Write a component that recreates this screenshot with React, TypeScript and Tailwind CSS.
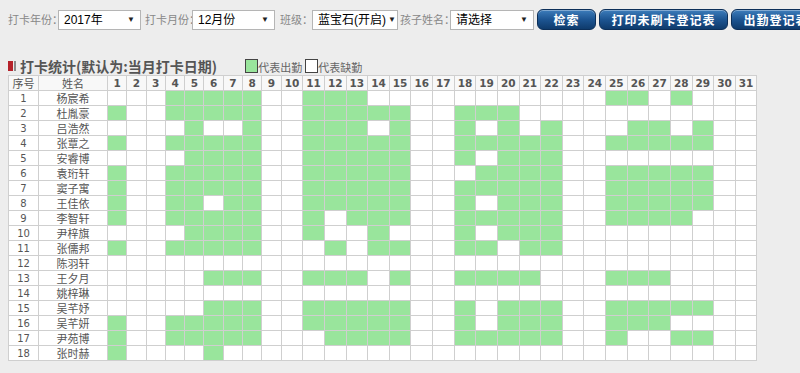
import React from "react";

const rows: [string, number[]][] = [
  ["杨宸希", [4, 5, 6, 7, 8, 11, 12, 13, 25, 26, 28]],
  ["杜胤豪", [1, 4, 5, 6, 7, 8, 11, 12, 13, 14, 15, 18, 19, 20]],
  ["吕浩然", [5, 8, 11, 12, 13, 15, 18, 20, 22, 26, 27, 29]],
  ["张覃之", [1, 4, 5, 6, 7, 8, 11, 12, 13, 14, 15, 18, 19, 20, 21, 22, 25, 26, 27, 28, 29]],
  ["安睿博", [5, 6, 7, 8, 11, 12, 13, 14, 15, 18, 20, 21, 22]],
  ["袁珩轩", [1, 4, 5, 6, 7, 8, 11, 12, 13, 14, 15, 19, 20, 21, 22, 25, 26, 27, 28, 29]],
  ["窦子寓", [1, 4, 5, 6, 7, 8, 11, 12, 13, 14, 15, 18, 19, 20, 21, 22, 25, 26, 27, 28, 29]],
  ["王佳依", [1, 4, 5, 7, 8, 11, 12, 13, 14, 15, 18, 20, 21, 22, 25, 26, 27, 28, 29]],
  ["李智轩", [1, 4, 5, 6, 7, 8, 11, 13, 14, 15, 18, 19, 20, 21, 22, 25, 26, 27, 28]],
  ["尹梓旗", [5, 6, 7, 8, 11, 14, 18, 20, 21, 22]],
  ["张儒邦", [1, 4, 5, 6, 7, 8, 12, 14, 15, 18, 19, 21, 22]],
  ["陈羽轩", []],
  ["王夕月", [6, 7, 8, 11, 12, 13, 15, 18, 19, 20, 21, 25, 26, 27]],
  ["姚梓琳", []],
  ["吴芊妤", [6, 7, 8, 11, 12, 13, 14, 15, 18, 20, 21, 22, 25, 26, 27, 28, 29]],
  ["吴芊妍", [1, 4, 5, 6, 7, 8, 11, 12, 13, 14, 15, 18, 20, 21, 22, 25, 26, 27]],
  ["尹苑博", [1, 4, 5, 6, 7, 8, 12, 13, 14, 15, 18, 19, 20, 21, 22, 25, 28, 29]],
  ["张时赫", [1, 6]],
];

const days = Array.from({ length: 31 }, (_, i) => i + 1);

const cjk = "font-['Microsoft_YaHei','Noto_Sans_CJK_SC',sans-serif]";

function Sel({ text, w }: { text: string; w: string }) {
  return (
    <div
      className={`${w} h-[20px] bg-white border border-[#b5b5b5] flex items-center justify-between pl-[5px] pr-[5px] text-[12px] text-black whitespace-nowrap overflow-hidden font-['Liberation_Sans','Noto_Sans_CJK_SC',sans-serif]`}
    >
      <span className="leading-none whitespace-nowrap">{text}</span>
      <span className="text-[8px] leading-none text-[#222] shrink-0 ml-[2px]">▼</span>
    </div>
  );
}

function Btn({ text, w }: { text: string; w: string }) {
  return (
    <div
      className={`${w} shrink-0 h-[21px] rounded-[6px] border border-[#0c2f59] bg-gradient-to-b from-[#3d7dbb] via-[#1d5592] to-[#0f3b6c] shadow-[inset_0_1px_0_rgba(255,255,255,0.35)] flex items-center justify-center whitespace-nowrap text-white text-[12px] font-bold tracking-[1px] ${cjk}`}
    >
      {text}
    </div>
  );
}

export default function App() {
  return (
    <div className="w-[800px] h-[373px] overflow-hidden bg-[#ededed]">
      {/* toolbar */}
      <div className={`flex items-center pt-[9px] pl-[8px] h-[30px] text-[11px] text-[#888] ${cjk}`}>
        <span className="w-[50px] shrink-0 whitespace-nowrap">打卡年份：</span>
        <Sel text="2017年" w="w-[83px] shrink-0" />
        <span className="w-[51px] shrink-0 pl-[4px] whitespace-nowrap">打卡月份：</span>
        <Sel text="12月份" w="w-[83px] shrink-0" />
        <span className="w-[37px] shrink-0 pl-[5px] whitespace-nowrap">班级：</span>
        <Sel text="蓝宝石(开启)" w="w-[86px] shrink-0" />
        <span className="w-[52px] shrink-0 pl-[2px] whitespace-nowrap">孩子姓名：</span>
        <Sel text="请选择" w="w-[84px] shrink-0" />
        <div className="w-[3px] shrink-0" />
        <Btn text="检索" w="w-[59px]" />
        <div className="w-[3px] shrink-0" />
        <Btn text="打印未刷卡登记表" w="w-[129px]" />
        <div className="w-[3px] shrink-0" />
        <Btn text="出勤登记表" w="w-[90px]" />
      </div>

      {/* title */}
      <div className="flex items-center pl-[8px] mt-[27px] h-[18px]">
        <div className="w-[5px] h-[10px] bg-[#b5222a]" />
        <div className="w-[2px] h-[10px] bg-[#8a8a8a] ml-[1px]" />
        <span className={`ml-[4px] text-[14px] font-bold text-[#555] leading-none ${cjk}`}>
          打卡统计(默认为:当月打卡日期)
        </span>
        <div className="ml-[28px] w-[13px] h-[14px] bg-[#99e59c] border border-[#444]" />
        <span className={`text-[11px] text-[#666] leading-none mt-[3px] ${cjk}`}>代表出勤</span>
        <div className="ml-[3px] w-[13px] h-[14px] bg-white border border-[#444]" />
        <span className={`text-[11px] text-[#666] leading-none mt-[3px] ${cjk}`}>代表缺勤</span>
      </div>

      {/* table */}
      <div className="pl-[8px]">
        <table className="table-fixed border-collapse w-[749px] text-[#555]">
          <colgroup>
            <col className="w-[30px]" />
            <col className="w-[69px]" />
            {days.map((d) => (
              <col key={d} className={d < 10 ? "w-[19.3px]" : "w-[21.64px]"} />
            ))}
          </colgroup>
          <thead>
            <tr className="h-[15px] bg-[#f8f8f8]">
              <th className={`border border-[#cfcfcf] p-0 text-[11px] font-normal leading-[13px] ${cjk}`}>序号</th>
              <th className={`border border-[#cfcfcf] p-0 text-[11px] font-normal leading-[13px] ${cjk}`}>姓名</th>
              {days.map((d) => (
                <th
                  key={d}
                  className="border border-[#cfcfcf] p-0 text-[10.5px] font-bold leading-[13px] font-['DejaVu_Sans',sans-serif]"
                >
                  {d}
                </th>
              ))}
            </tr>
          </thead>
          <tbody>
            {rows.map(([name, green], i) => (
              <tr key={i} className="h-[15px] bg-white">
                <td className="border border-[#cfcfcf] p-0 text-center text-[10px] leading-[13px] font-['DejaVu_Sans',sans-serif]">
                  {i + 1}
                </td>
                <td className={`border border-[#cfcfcf] p-0 text-center text-[11px] leading-[13px] ${cjk}`}>{name}</td>
                {days.map((d) => (
                  <td
                    key={d}
                    className={`border border-[#cfcfcf] p-0 ${green.includes(d) ? "bg-[#99e59c]" : "bg-white"}`}
                  />
                ))}
              </tr>
            ))}
          </tbody>
        </table>
      </div>
    </div>
  );
}
